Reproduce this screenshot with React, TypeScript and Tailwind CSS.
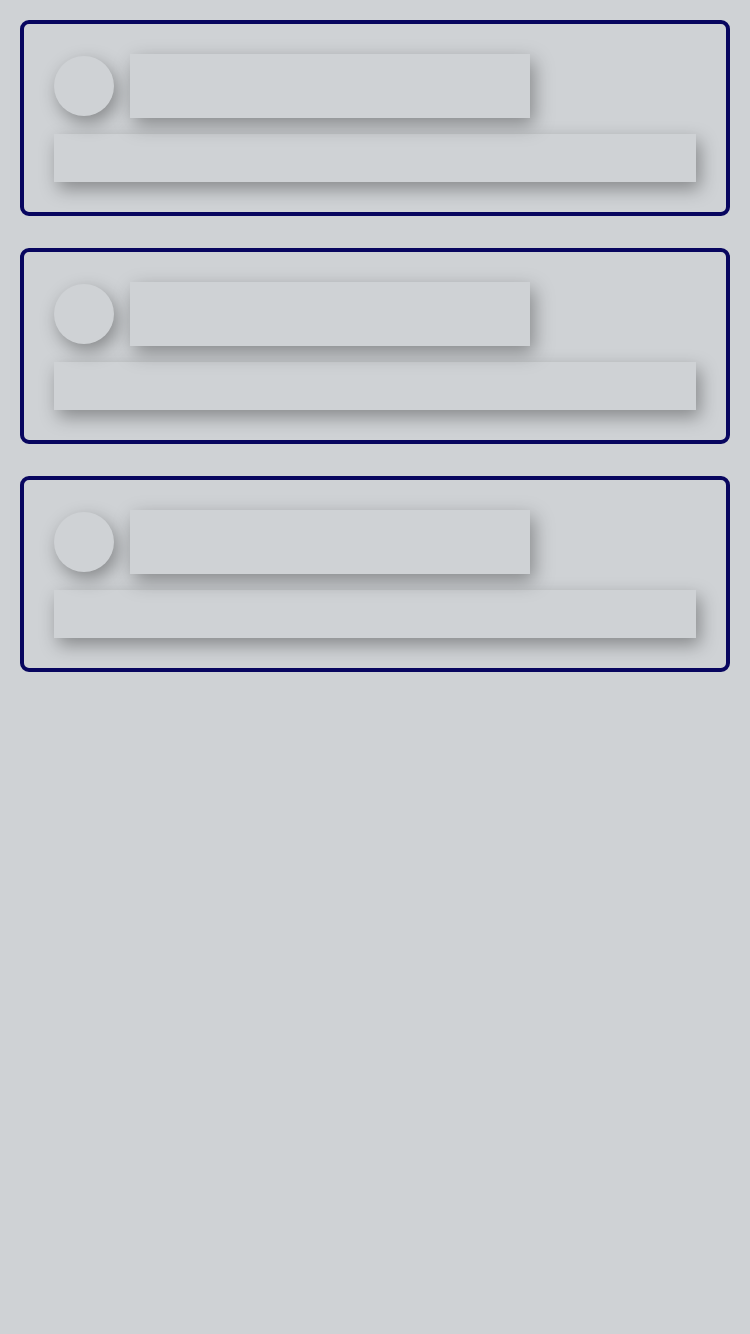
export default function App() {
  const cards = [0, 1, 2]
  return (
    <div className="min-h-[1334px] w-[750px] bg-[#cfd2d5] px-5 pt-5">
      <div className="flex flex-col gap-8">
        {cards.map((i) => (
          <div key={i} className="rounded-[9px] border-4 border-[#08065f] p-[30px]">
            <div className="flex items-center gap-4">
              <div className="h-[60px] w-[60px] rounded-full bg-[#cfd2d5] shadow-[4px_7px_18px_rgba(0,0,0,0.35)]" />
              <div className="h-16 w-[400px] bg-[#cfd2d5] shadow-[4px_7px_18px_rgba(0,0,0,0.35)]" />
            </div>
            <div className="mt-4 h-12 bg-[#cfd2d5] shadow-[4px_7px_18px_rgba(0,0,0,0.35)]" />
          </div>
        ))}
      </div>
    </div>
  )
}
